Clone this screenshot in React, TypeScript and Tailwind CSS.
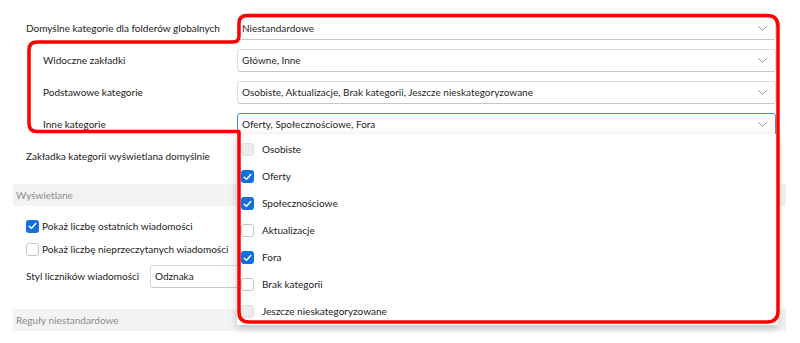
import type { JSX } from "react";

const FONT = "font-['Lato','Segoe_UI','Liberation_Sans',sans-serif]";

function Chevron(): JSX.Element {
  return (
    <svg width="9" height="5" viewBox="0 0 9 5" className="shrink-0">
      <path d="M0.5 0.5 L4.5 4.3 L8.5 0.5" fill="none" stroke="#9a9a9a" strokeWidth="1" />
    </svg>
  );
}

function Select({ value, focused = false }: { value: string; focused?: boolean }): JSX.Element {
  return (
    <div
      className={
        focused
          ? "flex h-[23px] flex-1 items-center justify-between rounded-[3px] border border-[#3d8be8] bg-white pl-[4px] pr-[8px]"
          : "flex h-[23px] flex-1 items-center justify-between rounded-[3px] border border-[#dcdcdc] border-b-[#c6c6c6] bg-white pl-[4px] pr-[8px]"
      }
    >
      <span className="truncate text-[#1f1f1f]">{value}</span>
      <Chevron />
    </div>
  );
}

function Box({ state }: { state: "on" | "off" | "disabled" }): JSX.Element {
  if (state === "on") {
    return (
      <span className="flex h-[13px] w-[13px] shrink-0 items-center justify-center rounded-[3px] bg-[#1270dc]">
        <svg width="9" height="8" viewBox="0 0 9 8">
          <path d="M1.2 4.2 L3.5 6.3 L7.8 1.6" fill="none" stroke="white" strokeWidth="1.5" strokeLinecap="round" strokeLinejoin="round" />
        </svg>
      </span>
    );
  }
  return (
    <span
      className={
        state === "disabled"
          ? "h-[13px] w-[13px] shrink-0 rounded-[3px] border border-[#dedede] bg-[#ececec]"
          : "h-[13px] w-[13px] shrink-0 rounded-[3px] border border-[#c4c4c4] bg-white"
      }
    />
  );
}

const OPTIONS: { label: string; state: "on" | "off" | "disabled" }[] = [
  { label: "Osobiste", state: "disabled" },
  { label: "Oferty", state: "on" },
  { label: "Społecznościowe", state: "on" },
  { label: "Aktualizacje", state: "off" },
  { label: "Fora", state: "on" },
  { label: "Brak kategorii", state: "off" },
  { label: "Jeszcze nieskategoryzowane", state: "disabled" },
];

export default function App(): JSX.Element {
  return (
    <div className={`relative h-[343px] w-[800px] overflow-hidden whitespace-nowrap bg-white text-[10px] text-[#222] ${FONT}`}>
      <div className="pl-[13px] pr-[14px] pt-[16px]">
        <div className="mr-[10px] flex flex-col gap-[8px]">
          <div className="flex h-[24px] items-center">
            <span className="w-[224px] shrink-0 pl-[13px]">Domyślne kategorie dla folderów globalnych</span>
            <Select value="Niestandardowe" />
          </div>
          <div className="flex h-[24px] items-center">
            <span className="w-[224px] shrink-0 pl-[30px]">Widoczne zakładki</span>
            <Select value="Główne, Inne" />
          </div>
          <div className="flex h-[24px] items-center">
            <span className="w-[224px] shrink-0 pl-[30px]">Podstawowe kategorie</span>
            <Select value="Osobiste, Aktualizacje, Brak kategorii, Jeszcze nieskategoryzowane" />
          </div>
          <div className="flex h-[24px] items-center">
            <span className="w-[224px] shrink-0 pl-[30px]">Inne kategorie</span>
            <Select value="Oferty, Społecznościowe, Fora" focused />
          </div>
          <div className="flex h-[24px] items-center">
            <span className="w-[224px] shrink-0 pl-[13px]">Zakładka kategorii wyświetlana domyślnie</span>
            <Select value="" />
          </div>
        </div>

        <div className="mt-[16px] flex h-[22px] items-center bg-[#f3f3f3] pl-[3px] text-[#8c8c8c]">Wyświetlane</div>

        <div className="flex flex-col pl-[13px]">
          <label className="mt-[11px] flex h-[18px] items-center gap-[3px]">
            <Box state="on" />
            <span>Pokaż liczbę ostatnich wiadomości</span>
          </label>
          <label className="mt-[5px] flex h-[18px] items-center gap-[3px]">
            <Box state="off" />
            <span>Pokaż liczbę nieprzeczytanych wiadomości</span>
          </label>
          <div className="mt-[7px] flex h-[23px] items-center">
            <span className="w-[124px] shrink-0">Styl liczników wiadomości</span>
            <div className="flex h-[23px] w-[200px] items-center rounded-[3px] border border-[#dcdcdc] border-b-[#c6c6c6] pl-[4px]">Odznaka</div>
          </div>
        </div>

        <div className="mt-[21px] flex h-[22px] items-center bg-[#f3f3f3] pl-[3px] text-[#8c8c8c]">Reguły niestandardowe</div>
      </div>

      {/* rozwinięta lista "Inne kategorie" */}
      <div className="absolute left-[237px] top-[134px] w-[541px] bg-white pt-[2px] shadow-[0_3px_8px_rgba(0,0,0,0.22)]">
        {OPTIONS.map((o) => (
          <div key={o.label} className="flex h-[27px] items-center gap-[8px] pl-[4px]">
            <Box state={o.state} />
            <span className="text-[#222]">{o.label}</span>
          </div>
        ))}
      </div>

      {/* czerwona ramka adnotacji */}
      <svg className="pointer-events-none absolute inset-0" width="800" height="343" viewBox="0 0 800 343">
        <path
          d="M29 50 Q29 42 37 42 L233 42 Q239 42 239 36 L239 23.5 Q239 15.5 247 15.5 L767 15.5 Q778 15.5 778 26.5 L778 311 Q778 322 767 322 L249 322 Q239 322 239 312 L239 131.5 L37 131.5 Q29 131.5 29 123.5 Z"
          fill="none"
          stroke="#ff0000"
          strokeWidth="3.5"
          strokeLinejoin="round"
        />
      </svg>
    </div>
  );
}
